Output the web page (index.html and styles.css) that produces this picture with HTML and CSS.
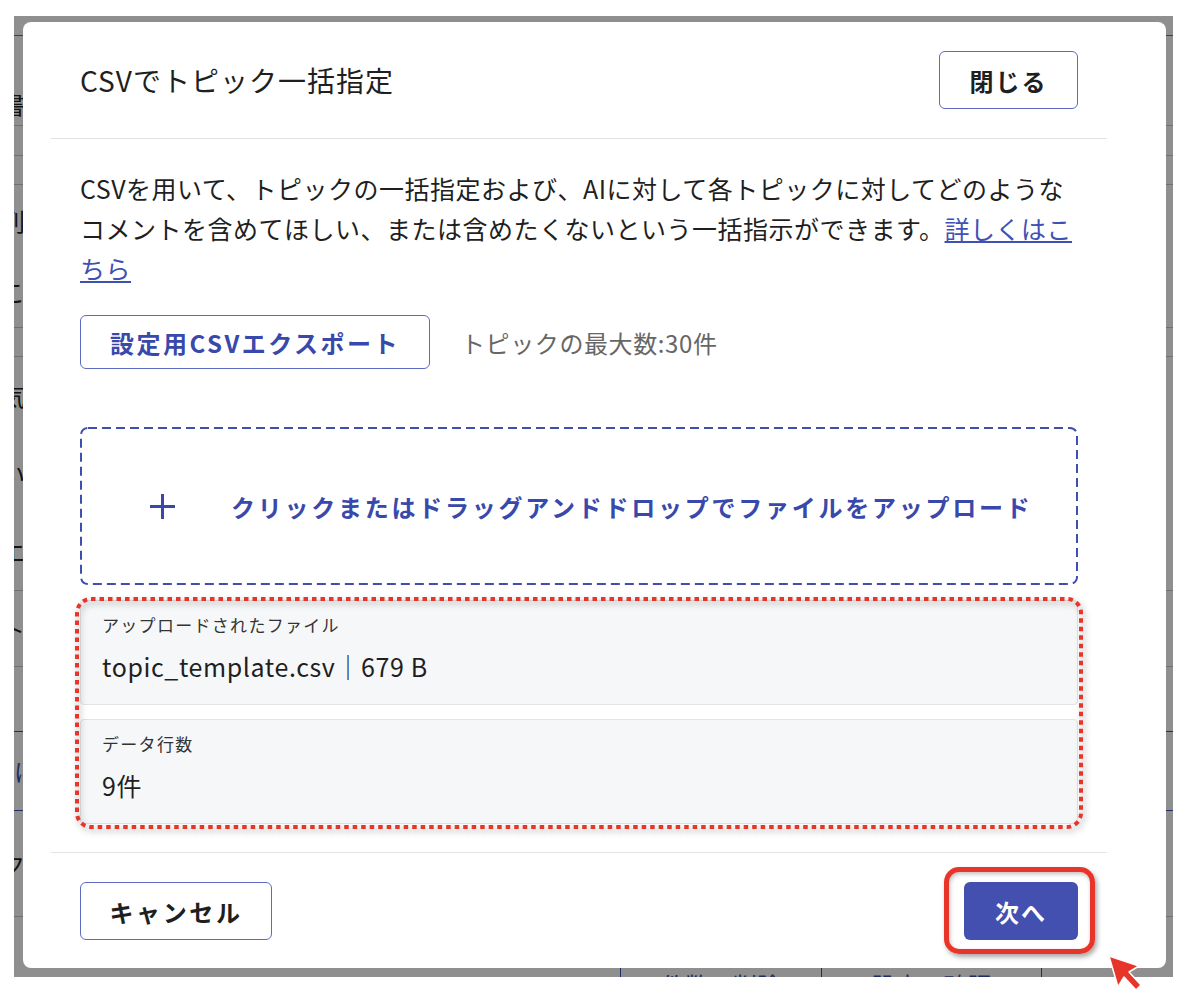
FILE: index.html
```html
<!DOCTYPE html>
<html lang="ja">
<head>
    <meta charset="UTF-8">
    <meta name="viewport" content="width=device-width, initial-scale=1.0">
    <title>CSVでトピック一括指定</title>
    <link rel="stylesheet" href="styles.css">
</head>
<body>
    <div class="frame">
        <!-- 背景のページ（モーダルの下） -->
        <div class="page">
            <div class="bg-row dark" style="height: 20px"></div>
            <div class="bg-row low" style="height: 90px"><span class="frag-left">書</span></div>
            <div class="bg-row" style="height: 30px"></div>
            <div class="bg-row" style="height: 29px"></div>
            <div class="bg-row tall" style="height: 143px">
                <span class="frag-left">列</span>
                <span class="frag-left">こ</span>
            </div>
            <div class="bg-row" style="height: 29px"></div>
            <div class="bg-row tall" style="height: 234px">
                <span class="frag-left">気</span>
                <span class="frag-left">い</span>
                <span class="frag-left">エ</span>
            </div>
            <div class="bg-row" style="height: 76px"><span class="frag-left">ト</span></div>
            <div class="bg-row blue" style="height: 65px"></div>
            <div class="bg-row blue" style="height: 79px"><span class="frag-right">け</span></div>
            <div class="bg-row" style="height: 106px"><span class="frag-left">ク</span><span class="frag-right">z</span></div>
            <div class="bg-cells">
                <div class="bg-cell" style="width: 606px"></div>
                <div class="bg-cell link">件数の削除</div>
                <div class="bg-cell link" style="width: 219px">設定の確認</div>
                <div class="bg-cell"></div>
            </div>
        </div>
        <div class="backdrop"></div>

        <div class="modal">
            <div class="modal-header">
                <h2 class="modal-title">CSVでトピック一括指定</h2>
                <button class="btn btn-outline btn-close">閉じる</button>
            </div>

            <div class="modal-body">
                <p class="desc">CSVを用いて、トピックの一括指定および、AIに対して各トピックに対してどのようなコメントを含めてほしい、または含めたくないという一括指示ができます。<a href="#" class="link-more">詳しくはこちら</a></p>

                <div class="export-row">
                    <button class="btn btn-outline btn-export">設定用CSVエクスポート</button>
                    <span class="max-note">トピックの最大数:30件</span>
                </div>

                <div class="dropzone">
                    <svg class="dropzone-border" width="998" height="158" viewBox="0 0 998 158">
                        <rect x="1" y="1" width="996" height="156" rx="7" fill="none" stroke="#3f4fb0" stroke-width="2" stroke-dasharray="9 5"/>
                    </svg>
                    <svg class="plus" width="25" height="25" viewBox="0 0 25 25">
                        <path d="M12.5 0v25M0 12.5h25" stroke="#3949ab" stroke-width="3"/>
                    </svg>
                    <span class="dropzone-text">クリックまたはドラッグアンドドロップでファイルをアップロード</span>
                </div>

                <div class="file-info">
                    <div class="info-card">
                        <div class="info-label">アップロードされたファイル</div>
                        <div class="info-value">topic_template.csv｜679 B</div>
                    </div>
                    <div class="info-card">
                        <div class="info-label">データ行数</div>
                        <div class="info-value">9件</div>
                    </div>
                    <svg class="mark-dotted" width="1010" height="234" viewBox="0 0 1010 234">
                        <rect x="3" y="3" width="1004" height="228" rx="14" fill="none" stroke="#e8352a" stroke-width="4" stroke-dasharray="4.5 4"/>
                    </svg>
                </div>
            </div>

            <div class="modal-footer">
                <button class="btn btn-outline btn-cancel">キャンセル</button>
                <div class="next-wrap">
                    <button class="btn btn-primary">次へ</button>
                    <span class="mark-box"></span>
                </div>
            </div>
        </div>
    </div>

    <!-- 注釈の矢印 -->
    <svg class="cursor" width="40" height="42" viewBox="0 0 40 42">
        <polygon points="3,3 33,13 23,19 35,32 30,37 18,24 12,34" fill="#e8352a" stroke="#fff" stroke-width="1.5" stroke-linejoin="round"/>
    </svg>
</body>
</html>
```

FILE: styles.css
```css
body {
    margin: 0;
    background-color: #fff;
    font-family: "Noto Sans CJK JP", "Noto Sans", sans-serif;
    color: #1f1f1f;
}
.frame {
    position: relative;
    width: 1159px;
    height: 961px;
    margin: 16px 0 0 14px;
    overflow: hidden;
}

/* 背景ページ */
.page {
    display: flex;
    flex-direction: column;
    background-color: #fff;
    font-size: 24px;
    color: #222;
}
.bg-row {
    box-sizing: border-box;
    display: flex;
    justify-content: space-between;
    align-items: center;
    border-bottom: 1px solid #c8c8c8;
}
.bg-row.dark {
    border-bottom-color: #777;
}
.bg-row.blue {
    border-bottom-color: #3f51b5;
}
.bg-row.low {
    align-items: flex-end;
    padding-bottom: 4px;
}
.bg-row.tall {
    flex-direction: column;
    justify-content: space-around;
    align-items: flex-start;
}
.frag-left {
    margin-left: -13px;
}
.frag-right {
    margin-right: -12px;
    color: #3f51b5;
}
.bg-cells {
    display: flex;
    height: 60px;
}
.bg-cell {
    flex-shrink: 0;
    width: 200px;
    border-right: 1px solid #3f51b5;
    padding-top: 50px;
    text-align: center;
}
.bg-cell.link {
    color: #3f51b5;
}
.backdrop {
    position: absolute;
    inset: 0;
    background-color: rgba(0, 0, 0, 0.44);
}

/* モーダル */
.modal {
    position: absolute;
    left: 9px;
    top: 6px;
    width: 1143px;
    height: 946px;
    box-sizing: border-box;
    padding: 0 59px 0 28px;
    display: flex;
    flex-direction: column;
    background-color: #fff;
    border-radius: 8px;
}
.modal-header {
    display: flex;
    justify-content: space-between;
    align-items: center;
    padding: 29px 29px 29px;
    border-bottom: 1px solid #e2e2e2;
}
.modal-title {
    margin: 0;
    font-size: 28px;
    font-weight: 400;
    letter-spacing: 1px;
}
.btn {
    box-sizing: border-box;
    height: 58px;
    border-radius: 6px;
    font-family: inherit;
    font-size: 24px;
    font-weight: 700;
    letter-spacing: 2px;
    cursor: pointer;
}
.btn-outline {
    background-color: #fff;
    border: 1px solid #5c6bc0;
    color: #1f1f1f;
}
.btn-close {
    width: 139px;
}
.btn-cancel {
    width: 192px;
    letter-spacing: 2.6px;
}
.btn-primary {
    width: 114px;
    background-color: #4350af;
    border: none;
    color: #fff;
}

.modal-body {
    flex: 1;
    padding: 29px 29px 0;
}
.desc {
    margin: 0;
    font-size: 25px;
    line-height: 40px;
    letter-spacing: 0.5px;
}
.link-more {
    color: #3f51b5;
}
.export-row {
    display: flex;
    align-items: center;
    gap: 31px;
    margin-top: 27px;
}
.btn-export {
    width: 350px;
    height: 54px;
    color: #3949ab;
    letter-spacing: 2.5px;
}
.max-note {
    font-size: 24px;
    color: #666;
    letter-spacing: 0.6px;
}

.dropzone {
    position: relative;
    display: flex;
    align-items: center;
    height: 158px;
    margin-top: 58px;
    padding-left: 70px;
}
.dropzone-border {
    position: absolute;
    left: 0;
    top: 0;
}
.plus {
    margin-right: 56px;
}
.dropzone-text {
    font-size: 24px;
    font-weight: 700;
    color: #3949ab;
    letter-spacing: 2.75px;
}

.file-info {
    position: relative;
    display: flex;
    flex-direction: column;
    gap: 14px;
    margin-top: 15px;
}
.info-card {
    padding: 12px 21px 21px;
    background-color: #f6f7f9;
    border: 1px solid #e3e3e3;
    border-radius: 4px;
}
.info-label {
    font-size: 17px;
    line-height: 24px;
    color: #333;
    letter-spacing: 1.3px;
}
.info-value {
    margin-top: 12px;
    font-size: 25px;
    line-height: 34px;
    letter-spacing: 0.6px;
}
.mark-dotted {
    position: absolute;
    left: -6px;
    top: -4px;
    filter: drop-shadow(2px 3px 3px rgba(0, 0, 0, 0.35));
}

.modal-footer {
    display: flex;
    justify-content: space-between;
    align-items: center;
    padding: 29px 29px 28px;
    border-top: 1px solid #e2e2e2;
}
.next-wrap {
    position: relative;
}
.mark-box {
    position: absolute;
    left: -20px;
    right: -17px;
    top: -15px;
    bottom: -14px;
    border: 5px solid #e8352a;
    border-radius: 15px;
    box-shadow: 2px 3px 5px rgba(0, 0, 0, 0.35), inset 1px 2px 4px rgba(0, 0, 0, 0.25);
}
.cursor {
    position: absolute;
    left: 1106px;
    top: 953px;
}
```
